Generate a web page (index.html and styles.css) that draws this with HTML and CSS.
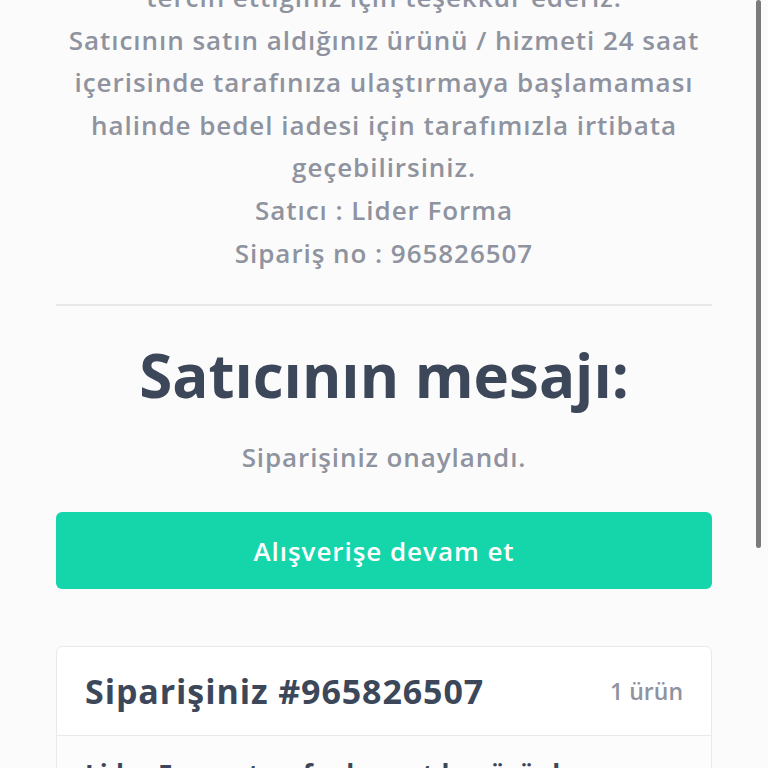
FILE: index.html
```html
<!DOCTYPE html>
<html lang="tr">
<head>
<meta charset="utf-8">
<title>Sipariş</title>
<link rel="stylesheet" href="styles.css">
</head>
<body>
<main class="page">
  <section class="intro">
    <p class="intro-text">tercih ettiğiniz için teşekkür ederiz.<br>Satıcının satın aldığınız ürünü / hizmeti 24 saat<br>içerisinde tarafınıza ulaştırmaya başlamaması<br>halinde bedel iadesi için tarafımızla irtibata<br>geçebilirsiniz.<br>Satıcı : Lider Forma<br>Sipariş no : 965826507</p>
  </section>
  <hr class="divider">
  <section class="message">
    <h1 class="message-title">Satıcının mesajı:</h1>
    <p class="message-text">Siparişiniz onaylandı.</p>
    <a class="btn" href="#">Alışverişe devam et</a>
  </section>
  <section class="card">
    <div class="card-head">
      <h2 class="card-title">Siparişiniz #965826507</h2>
      <span class="card-count">1 ürün</span>
    </div>
    <div class="card-body">
      <p class="card-line">Lider Forma tarafından satılan ürünler</p>
    </div>
  </section>
</main>
<div class="scroll-thumb"></div>
</body>
</html>
```
FILE: styles.css
```css
html, body {
  margin: 0;
  padding: 0;
}
body {
  background: #fbfbfb;
  font-family: "Open Sans", "Liberation Sans", sans-serif;
  color: #8e939f;
  overflow: hidden;
}
.page {
  padding: 0 56px;
  margin-top: -24px;
}
.intro-text {
  margin: 0;
  text-align: center;
  font-size: 26px;
  font-weight: 600;
  letter-spacing: 0.95px;
  line-height: 42.6px;
  color: #8e939f;
  white-space: nowrap;
}
.divider {
  border: 0;
  border-top: 2px solid #e8e8e8;
  margin: 30px 0 0;
}
.message {
  text-align: center;
}
.message-title {
  margin: 31px 0 0;
  font-size: 60px;
  font-weight: 700;
  line-height: 76px;
  color: #3c4859;
}
.message-text {
  margin: 26px 0 0;
  font-size: 26px;
  font-weight: 600;
  letter-spacing: 0.9px;
  line-height: 36px;
  color: #8e939f;
}
.btn {
  display: flex;
  align-items: center;
  justify-content: center;
  margin-top: 37px;
  height: 77px;
  border-radius: 6px;
  background: #15d6ab;
  color: #ffffff;
  font-size: 26px;
  font-weight: 600;
  letter-spacing: 0.95px;
  text-decoration: none;
}
.card {
  margin-top: 57px;
  background: #ffffff;
  border: 1px solid #e9e9e9;
  border-radius: 6px;
}
.card-head {
  display: flex;
  align-items: center;
  justify-content: space-between;
  height: 88px;
  padding: 0 28px;
  border-bottom: 1px solid #e9e9e9;
}
.card-title {
  margin: 0;
  font-size: 34px;
  font-weight: 700;
  letter-spacing: 0.9px;
  color: #3c4859;
}
.card-count {
  font-size: 23px;
  font-weight: 600;
  letter-spacing: 0;
  color: #8e939f;
}
.card-body {
  background: #fcfcfc;
  padding: 20px 28px;
}
.card-line {
  margin: 0;
  font-size: 26px;
  font-weight: 700;
  color: #3c4859;
}
.scroll-thumb {
  position: fixed;
  top: 0;
  right: 7px;
  width: 5px;
  height: 548px;
  border-radius: 3px;
  background: #7b7b7b;
}
```
